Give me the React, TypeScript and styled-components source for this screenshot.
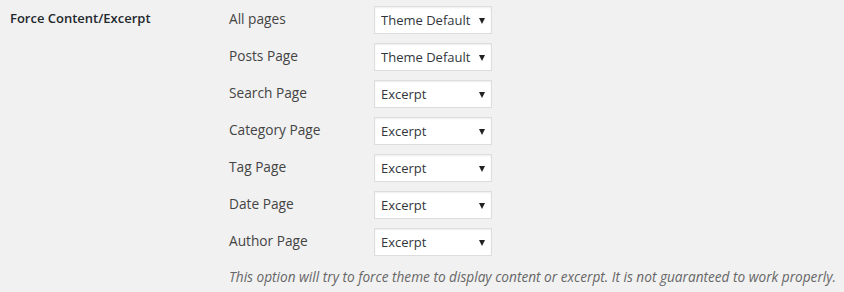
import React from 'react';
import styled, { createGlobalStyle } from 'styled-components';

const GlobalStyle = createGlobalStyle`
  html, body {
    margin: 0;
    padding: 0;
    background: #f1f1f1;
  }
  body {
    font-family: "Segoe UI", "Open Sans", "Noto Sans", sans-serif;
    font-size: 14px;
    color: #444;
  }
`;

const Page = styled.div`
  width: 844px;
  height: 292px;
  overflow: hidden;
  background: #f1f1f1;
`;

const FormRow = styled.div`
  display: grid;
  grid-template-columns: 220px 1fr;
  padding-left: 10px;
`;

const Heading = styled.div`
  font-weight: 600;
  font-size: 13px;
  color: #23282d;
  line-height: 19px;
  padding-top: 9px;
`;

const Field = styled.div`
  display: flex;
  flex-direction: column;
  padding-top: 1px;
  margin-left: -1px;
`;

const OptionRow = styled.div`
  display: grid;
  grid-template-columns: 145px 118px;
  height: 37px;
  align-items: start;
`;

const OptionLabel = styled.div`
  line-height: 19px;
  padding-top: 8px;
  font-size: 13.7px;
  color: #444;
`;

const SelectWrap = styled.div`
  position: relative;
  margin-top: 5px;
  height: 28px;
`;

const Select = styled.select`
  appearance: none;
  -webkit-appearance: none;
  width: 118px;
  height: 28px;
  margin: 0;
  padding: 0 12px 0 6px;
  border: 1px solid #ddd;
  border-radius: 0;
  background: #fff;
  box-shadow: inset 0 1px 2px rgba(0, 0, 0, 0.07);
  font-family: inherit;
  font-size: 13px;
  color: #32373c;
  outline: none;
`;

const Arrow = styled.span`
  position: absolute;
  right: 7px;
  top: 12px;
  width: 0;
  height: 0;
  border-left: 3.5px solid transparent;
  border-right: 3.5px solid transparent;
  border-top: 6px solid #222;
  pointer-events: none;
`;

const Description = styled.p`
  margin: 7px 0 0;
  font-style: italic;
  font-size: 13.65px;
  color: #666;
  line-height: 20px;
  white-space: nowrap;
`;

const options = [
  { label: 'All pages', value: 'Theme Default' },
  { label: 'Posts Page', value: 'Theme Default' },
  { label: 'Search Page', value: 'Excerpt' },
  { label: 'Category Page', value: 'Excerpt' },
  { label: 'Tag Page', value: 'Excerpt' },
  { label: 'Date Page', value: 'Excerpt' },
  { label: 'Author Page', value: 'Excerpt' },
];

export default function App() {
  return (
    <Page>
      <GlobalStyle />
      <FormRow>
        <Heading>Force Content/Excerpt</Heading>
        <Field>
          {options.map(o => (
            <OptionRow key={o.label}>
              <OptionLabel>{o.label}</OptionLabel>
              <SelectWrap>
                <Select defaultValue={o.value}>
                  <option>Theme Default</option>
                  <option>Content</option>
                  <option>Excerpt</option>
                </Select>
                <Arrow />
              </SelectWrap>
            </OptionRow>
          ))}
          <Description>
            This option will try to force theme to display content or excerpt. It is not guaranteed to work properly.
          </Description>
        </Field>
      </FormRow>
    </Page>
  );
}
